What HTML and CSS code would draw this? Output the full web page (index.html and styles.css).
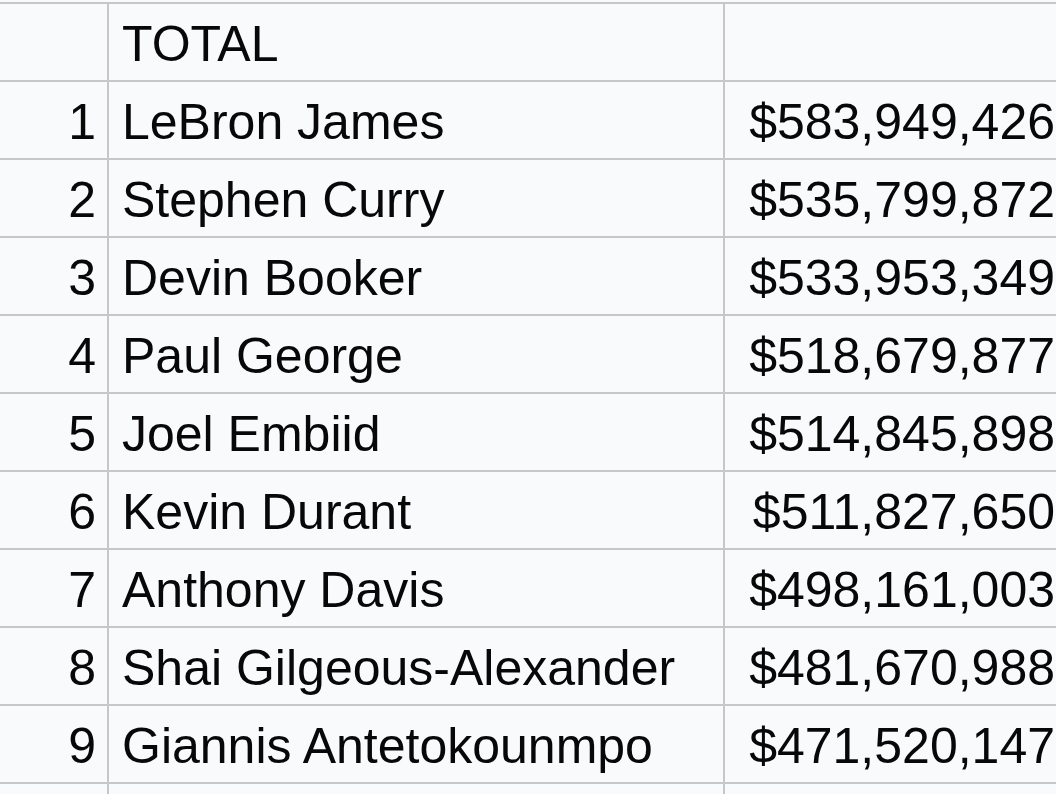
FILE: index.html
```html
<!DOCTYPE html>
<html lang="en">
<head>
<meta charset="utf-8">
<title>Career Earnings</title>
<link rel="stylesheet" href="styles.css">
</head>
<body>
<div class="sheet">
  <div class="cell num"></div><div class="cell name">TOTAL</div><div class="cell amt"></div>
  <div class="cell num">1</div><div class="cell name">LeBron James</div><div class="cell amt">$583,949,426</div>
  <div class="cell num">2</div><div class="cell name">Stephen Curry</div><div class="cell amt">$535,799,872</div>
  <div class="cell num">3</div><div class="cell name">Devin Booker</div><div class="cell amt">$533,953,349</div>
  <div class="cell num">4</div><div class="cell name">Paul George</div><div class="cell amt">$518,679,877</div>
  <div class="cell num">5</div><div class="cell name">Joel Embiid</div><div class="cell amt">$514,845,898</div>
  <div class="cell num">6</div><div class="cell name">Kevin Durant</div><div class="cell amt">$511,827,650</div>
  <div class="cell num">7</div><div class="cell name">Anthony Davis</div><div class="cell amt">$498,161,003</div>
  <div class="cell num">8</div><div class="cell name">Shai Gilgeous-Alexander</div><div class="cell amt">$481,670,988</div>
  <div class="cell num">9</div><div class="cell name">Giannis Antetokounmpo</div><div class="cell amt">$471,520,147</div>
  <div class="cell num"></div><div class="cell name"></div><div class="cell amt"></div>
</div>
</body>
</html>
```

FILE: styles.css
```css
html, body {
  margin: 0;
  padding: 0;
  background: #f9fafc;
  overflow: hidden;
}
body {
  font-family: "Liberation Sans", Arial, sans-serif;
  color: #080808;
}
.sheet {
  margin-top: 2px;
  height: 792px;
  overflow: hidden;
  box-sizing: border-box;
  border-top: 2px solid #c6c7c9;
  display: grid;
  grid-template-columns: 109px 616px 1fr;
  grid-auto-rows: 78px;
}
.cell {
  border-bottom: 2px solid #c6c7c9;
  display: flex;
  align-items: center;
  padding-top: 4px;
  font-size: 50px;
  line-height: 1;
  white-space: nowrap;
  overflow: hidden;
  box-sizing: border-box;
}
.num {
  border-right: 2px solid #c6c7c9;
  justify-content: flex-end;
  padding-right: 11px;
}
.name {
  border-right: 2px solid #c6c7c9;
  padding-left: 13px;
}
.amt {
  justify-content: flex-end;
  padding-right: 1px;
}
```
